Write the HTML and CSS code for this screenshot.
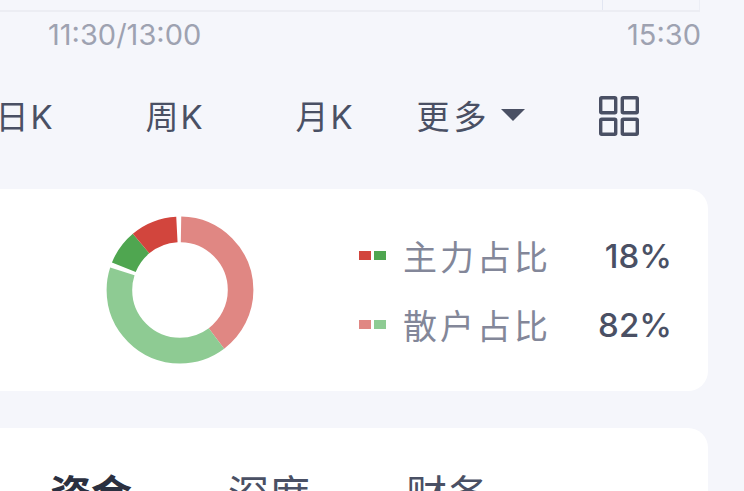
FILE: index.html
```html
<!DOCTYPE html>
<html lang="zh">
<head>
<meta charset="utf-8">
<title>行情</title>
<link rel="stylesheet" href="styles.css">
</head>
<body>
<main class="page">
  <section class="chart">
    <div class="chart-plot"><div class="chart-cell"></div></div>
    <div class="axis"><span>11:30/13:00</span><span>15:30</span></div>
  </section>
  <nav class="periods">
    <span class="period">日K</span>
    <span class="period">周K</span>
    <span class="period">月K</span>
    <span class="period period-more">更多<i class="caret"></i></span>
    <span class="period period-icon">
      <svg width="40" height="40" viewBox="0 0 40 40" fill="none" stroke="#4a5064" stroke-width="3.400" stroke-linejoin="round"><rect x="1.700" y="1.700" width="15" height="15" rx="1"/><rect x="23.300" y="1.700" width="15" height="15" rx="1"/><rect x="1.700" y="23.300" width="15" height="15" rx="1"/><rect x="23.300" y="23.300" width="15" height="15" rx="1"/></svg>
    </span>
  </nav>
  <section class="card card-ratio">
    <svg class="donut" width="148" height="148" viewBox="0 0 148 148" fill="none" stroke-width="25.600">
      <g transform="rotate(-90 74 74)">
        <circle cx="74" cy="74" r="60.600" pathLength="360" stroke="#e08783" stroke-dasharray="142 360" stroke-dashoffset="-1"/>
        <circle cx="74" cy="74" r="60.600" pathLength="360" stroke="#8ecb93" stroke-dasharray="145 360" stroke-dashoffset="-143"/>
        <circle cx="74" cy="74" r="60.600" pathLength="360" stroke="#4fa650" stroke-dasharray="28 360" stroke-dashoffset="-292"/>
        <circle cx="74" cy="74" r="60.600" pathLength="360" stroke="#d2453d" stroke-dasharray="37 360" stroke-dashoffset="-320"/>
      </g>
    </svg>
    <div class="legend">
      <div class="legend-row">
        <span class="swatches"><i class="sw sw-red"></i><i class="sw sw-green"></i></span>
        <span class="legend-label">主力占比</span>
        <span class="legend-value">18%</span>
      </div>
      <div class="legend-row">
        <span class="swatches"><i class="sw sw-lred"></i><i class="sw sw-lgreen"></i></span>
        <span class="legend-label">散户占比</span>
        <span class="legend-value">82%</span>
      </div>
    </div>
  </section>
  <section class="card card-tabs">
    <span class="tab tab-active">资金</span>
    <span class="tab">深度</span>
    <span class="tab">财务</span>
  </section>
</main>
</body>
</html>
```
FILE: styles.css
```css
* { box-sizing: border-box; }
html, body { margin: 0; height: 100%; }
body {
  background: #f5f6fb;
  overflow: hidden;
  font-family: "Inter", "Noto Sans CJK SC", sans-serif;
}
.page {
  width: 800px;
  margin-left: -92px;
  height: 491px;
  overflow: hidden;
}
.chart { width: 792px; }
.chart-plot {
  height: 12px;
  border-bottom: 2px solid #ecedf3;
  display: flex;
  justify-content: flex-end;
}
.chart-cell {
  width: 98px;
  border-left: 1px solid #e2e6f2;
  border-right: 1px solid #eceef5;
}
.axis {
  display: flex;
  justify-content: space-between;
  font-size: 29px;
  line-height: 34px;
  color: #9ea2b1;
  padding: 6px 0 0 140px;
  margin-right: -1px;
}
.periods {
  display: flex;
  align-items: center;
  height: 137px;
  padding-bottom: 11px;
  margin-left: 42px;
  color: #4a5064;
  font-size: 33px;
  letter-spacing: 2px;
}
.period {
  width: 150px;
  text-align: center;
  flex: none;
}
.period-more {
  display: flex;
  align-items: center;
  justify-content: center;
  letter-spacing: 4px;
  gap: 10px;
  padding-right: 9px;
}
.caret {
  width: 0;
  height: 0;
  border-left: 12px solid transparent;
  border-right: 12px solid transparent;
  border-top: 12px solid #4a5064;
}
.period-icon {
  display: flex;
  justify-content: center;
  margin: 2px 0 0 -6px;
}
.card {
  background: #fff;
  border-radius: 20px;
  width: 800px;
}
.card-ratio {
  height: 202px;
  display: flex;
  align-items: center;
  padding-left: 197.500px;
}
.donut { flex: none; }
.legend {
  margin-left: 105.500px;
  display: flex;
  flex-direction: column;
  gap: 27px;
}
.legend-row {
  display: flex;
  align-items: center;
  height: 42px;
  width: 313px;
}
.swatches { display: flex; gap: 3px; margin-right: 17px; }
.sw { width: 12px; height: 9px; display: block; }
.sw-red { background: #d2453d; }
.sw-green { background: #4fa650; }
.sw-lred { background: #e08783; }
.sw-lgreen { background: #8ecb93; }
.legend-label {
  font-size: 34px;
  letter-spacing: 3px;
  color: #838799;
}
.legend-value {
  margin-left: auto;
  font-size: 33px;
  font-weight: 500;
  color: #4a5064;
}
.card-tabs {
  height: 120px;
  margin-top: 37px;
  display: flex;
  padding: 39px 0 0 142px;
  gap: 96px;
  font-size: 41px;
  color: #4a5064;
  line-height: 56px;
}
.tab-active { font-weight: 700; color: #2b3040; }
```
